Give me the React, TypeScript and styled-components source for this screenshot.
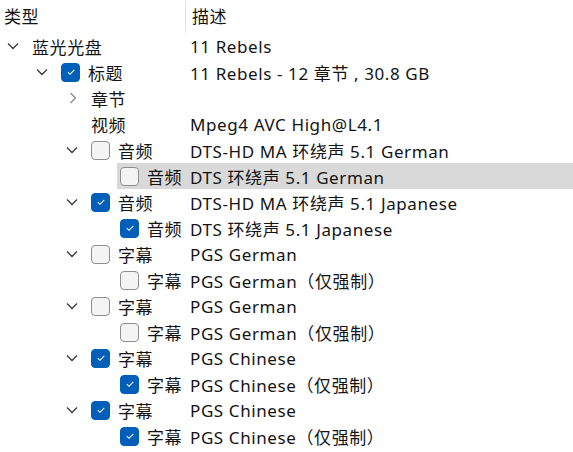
import React from "react";
import styled, { createGlobalStyle } from "styled-components";

const GlobalStyle = createGlobalStyle`
  html, body {
    margin: 0;
    padding: 0;
    background: #ffffff;
  }
  body {
    font-family: "Noto Sans", "Noto Sans CJK SC", sans-serif;
    color: #141414;
  }
`;

const NAME_COL = 186;
const indentOf = (depth: number) => Math.round(7 + depth * 29.4);
const SLOT = 22;

type Node = {
  name: string;
  desc?: string;
  check?: boolean;
  open?: boolean;
  selected?: boolean;
  children?: Node[];
};

const track = (desc: string, on: boolean, childDesc: string, childSel = false): Node => ({
  name: desc.startsWith("PGS") ? "字幕" : "音频",
  desc,
  check: on,
  open: true,
  children: [
    {
      name: desc.startsWith("PGS") ? "字幕" : "音频",
      desc: childDesc,
      check: on,
      selected: childSel,
    },
  ],
});

const tree: Node[] = [
  {
    name: "蓝光光盘",
    desc: "11 Rebels",
    open: true,
    children: [
      {
        name: "标题",
        desc: "11 Rebels - 12 章节 , 30.8 GB",
        check: true,
        open: true,
        children: [
          { name: "章节", open: false, children: [] },
          { name: "视频", desc: "Mpeg4 AVC High@L4.1" },
          track("DTS-HD MA 环绕声 5.1 German", false, "DTS 环绕声 5.1 German", true),
          track("DTS-HD MA 环绕声 5.1 Japanese", true, "DTS 环绕声 5.1 Japanese"),
          track("PGS German", false, "PGS German（仅强制）"),
          track("PGS German", false, "PGS German（仅强制）"),
          track("PGS Chinese", true, "PGS Chinese（仅强制）"),
          track("PGS Chinese", true, "PGS Chinese（仅强制）"),
        ],
      },
    ],
  },
];

const TreeView = styled.div`
  width: 573px;
  height: 452px;
  overflow: hidden;
  font-size: 17px;
  letter-spacing: 0.6px;
`;

const Header = styled.div`
  display: flex;
  height: 33px;
  align-items: stretch;
`;

const HeaderCell = styled.div<{ $w?: number }>`
  display: flex;
  align-items: center;
  padding-left: ${(p) => (p.$w ? 4 : 6)}px;
  padding-bottom: 2px;
  box-sizing: border-box;
  width: ${(p) => (p.$w ? `${p.$w}px` : "auto")};
  flex: ${(p) => (p.$w ? "none" : "1")};
  border-right: ${(p) => (p.$w ? "1px solid #e3e3e3" : "none")};
`;

const Row = styled.div`
  display: flex;
  height: 26px;
`;

const Indent = styled.div<{ $w: number }>`
  flex: none;
  width: ${(p) => p.$w}px;
  box-sizing: border-box;
  padding-left: ${(p) => p.$w - SLOT}px;
  display: flex;
  align-items: center;
`;

const Body = styled.div<{ $selected?: boolean }>`
  flex: 1;
  display: flex;
  align-items: center;
  padding-left: 3px;
  background: ${(p) => (p.$selected ? "#d9d9d9" : "transparent")};
`;

const NameCell = styled.div<{ $w: number }>`
  flex: none;
  width: ${(p) => p.$w}px;
  display: flex;
  align-items: center;
  white-space: nowrap;
`;

const DescCell = styled.div`
  padding-left: 4px;
  white-space: nowrap;
`;

const Box = styled.span<{ $on: boolean }>`
  flex: none;
  width: 19px;
  height: 19px;
  box-sizing: border-box;
  margin-right: 8px;
  border-radius: 4px;
  display: flex;
  align-items: center;
  justify-content: center;
  background: ${(p) => (p.$on ? "#005fb8" : "#f4f4f4")};
  border: 1px solid ${(p) => (p.$on ? "#005fb8" : "#8e8e8e")};
`;

const Chevron = ({ open }: { open: boolean }) =>
  open ? (
    <svg width="12" height="8" viewBox="0 0 12 8">
      <path d="M1 1.5 L6 6.5 L11 1.5" fill="none" stroke="#3a3a3a" strokeWidth="1.3" />
    </svg>
  ) : (
    <svg width="12" height="12" viewBox="0 0 12 12" style={{ marginLeft: 1 }}>
      <path d="M3.5 1 L8.5 6 L3.5 11" fill="none" stroke="#8a8a8a" strokeWidth="1.3" />
    </svg>
  );

const Check = () => (
  <svg width="10" height="8" viewBox="0 0 10 8">
    <path d="M1.8 4.2 L4 6.3 L8.3 1.8" fill="none" stroke="#ffffff" strokeWidth="1.1" />
  </svg>
);

const TreeRows = ({ nodes, depth }: { nodes: Node[]; depth: number }) => (
  <>
    {nodes.map((n, i) => {
      const w = indentOf(depth) + SLOT;
      return (
        <React.Fragment key={`${depth}-${i}`}>
          <Row>
            <Indent $w={w}>{n.children ? <Chevron open={!!n.open} /> : null}</Indent>
            <Body $selected={n.selected}>
              <NameCell $w={NAME_COL - w - 3}>
                {n.check !== undefined && (
                  <Box $on={n.check}>{n.check && <Check />}</Box>
                )}
                {n.name}
              </NameCell>
              <DescCell>{n.desc}</DescCell>
            </Body>
          </Row>
          {n.open && n.children && <TreeRows nodes={n.children} depth={depth + 1} />}
        </React.Fragment>
      );
    })}
  </>
);

export default function App() {
  return (
    <>
      <GlobalStyle />
      <TreeView>
        <Header>
          <HeaderCell $w={NAME_COL}>类型</HeaderCell>
          <HeaderCell>描述</HeaderCell>
        </Header>
        <TreeRows nodes={tree} depth={0} />
      </TreeView>
    </>
  );
}
